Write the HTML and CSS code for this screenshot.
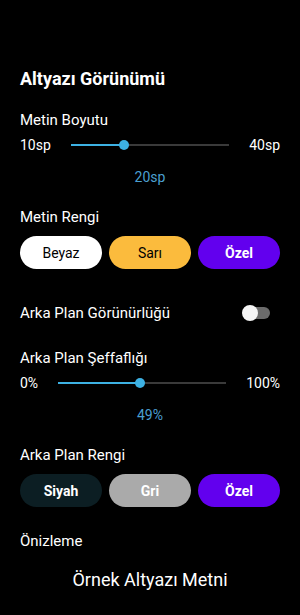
FILE: index.html
```html
<!DOCTYPE html>
<html>
  <head>
    <title>Altyazı Görünümü</title>
    <link rel="stylesheet" href="styles.css">
  </head>
  <body>
    <div class="screen">
      <h1 class="title">Altyazı Görünümü</h1>

      <div class="label">Metin Boyutu</div>
      <div class="slider">
        <span class="slider-min">10sp</span>
        <div class="track">
          <div class="track-fill" style="width: 33.3%"></div>
          <div class="thumb" style="left: 33.3%"></div>
        </div>
        <span class="slider-max">40sp</span>
      </div>
      <div class="value">20sp</div>

      <div class="label label-group">Metin Rengi</div>
      <div class="chips">
        <button class="chip chip-white">Beyaz</button>
        <button class="chip chip-yellow">Sarı</button>
        <button class="chip chip-purple">Özel</button>
      </div>

      <div class="toggle-row">
        <span class="label">Arka Plan Görünürlüğü</span>
        <div class="switch">
          <div class="switch-track"></div>
          <div class="switch-thumb"></div>
        </div>
      </div>

      <div class="label label-slider">Arka Plan Şeffaflığı</div>
      <div class="slider">
        <span class="slider-min">0%</span>
        <div class="track">
          <div class="track-fill" style="width: 49%"></div>
          <div class="thumb" style="left: 49%"></div>
        </div>
        <span class="slider-max">100%</span>
      </div>
      <div class="value">49%</div>

      <div class="label label-group">Arka Plan Rengi</div>
      <div class="chips">
        <button class="chip chip-dark">Siyah</button>
        <button class="chip chip-gray">Gri</button>
        <button class="chip chip-purple">Özel</button>
      </div>

      <div class="label label-preview">Önizleme</div>
      <div class="preview">Örnek Altyazı Metni</div>
    </div>
  </body>
</html>
```

FILE: styles.css
```css
body {
  margin: 0;
  background-color: #000;
  color: #fff;
  font-family: Roboto, "Noto Sans", sans-serif;
}

.screen {
  padding: 67px 20px 0;
}

.title {
  margin: 0;
  font-size: 18px;
  font-weight: 700;
  line-height: 24px;
}

.label {
  font-size: 15px;
  line-height: 20px;
}

.title + .label {
  margin-top: 19px;
}

.slider {
  display: flex;
  align-items: center;
  height: 20px;
  margin-top: 5px;
  font-size: 14px;
}

.track {
  flex: 1;
  position: relative;
  height: 2px;
  margin: 0 20px;
  background-color: #3a3a3a;
}

.track-fill {
  height: 100%;
  background-color: #3db1e3;
}

.thumb {
  position: absolute;
  top: 50%;
  width: 10px;
  height: 10px;
  margin: -5px 0 0 -5px;
  border-radius: 50%;
  background-color: #3db1e3;
}

.value {
  margin-top: 12px;
  text-align: center;
  font-size: 14px;
  line-height: 20px;
  color: #4b9fd0;
}

.label-group {
  margin-top: 20px;
}

.chips {
  display: flex;
  gap: 7px;
  margin-top: 9px;
}

.chip {
  flex: 1;
  height: 33px;
  border: none;
  border-radius: 17px;
  font-family: inherit;
  font-size: 14px;
  font-weight: 700;
}

.chip-white {
  background-color: #fff;
  color: #000;
  font-weight: 400;
}

.chip-yellow {
  background-color: #fbbb3d;
  color: #000;
  font-weight: 400;
}

.chip-purple {
  background-color: #6200ee;
  color: #fff;
}

.chip-dark {
  background-color: #0c1e23;
  color: #fff;
}

.chip-gray {
  background-color: #aaa;
  color: #fff;
}

.toggle-row {
  display: flex;
  align-items: center;
  justify-content: space-between;
  height: 20px;
  margin-top: 34px;
}

.switch {
  position: relative;
  width: 28px;
  height: 16px;
  margin-right: 10px;
}

.switch-track {
  position: absolute;
  left: 4px;
  right: 0;
  top: 2px;
  height: 12px;
  border-radius: 6px;
  background-color: #6b6b6b;
}

.switch-thumb {
  position: absolute;
  left: 0;
  top: 0;
  width: 16px;
  height: 16px;
  border-radius: 50%;
  background-color: #f5f5f5;
}

.label-slider {
  margin-top: 25px;
}

.label-preview {
  margin-top: 24px;
}

.preview {
  margin-top: 17px;
  text-align: center;
  font-size: 18px;
  line-height: 24px;
}
```
